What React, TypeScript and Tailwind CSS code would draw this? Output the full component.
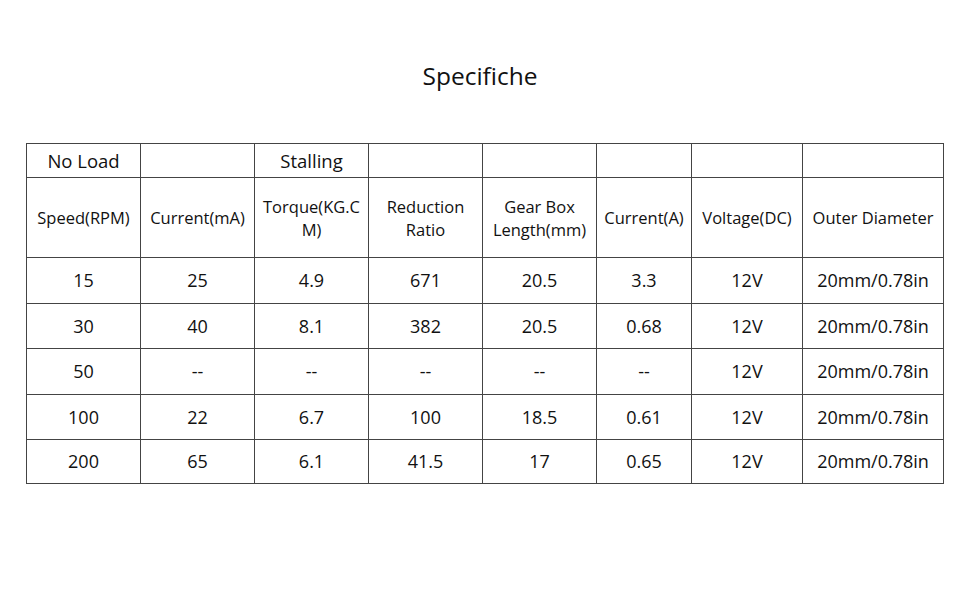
const headers = [
  "Speed(RPM)",
  "Current(mA)",
  "Torque(KG.C M)",
  "Reduction Ratio",
  "Gear Box Length(mm)",
  "Current(A)",
  "Voltage(DC)",
  "Outer Diameter",
];

const rows = [
  ["15", "25", "4.9", "671", "20.5", "3.3", "12V", "20mm/0.78in"],
  ["30", "40", "8.1", "382", "20.5", "0.68", "12V", "20mm/0.78in"],
  ["50", "--", "--", "--", "--", "--", "12V", "20mm/0.78in"],
  ["100", "22", "6.7", "100", "18.5", "0.61", "12V", "20mm/0.78in"],
  ["200", "65", "6.1", "41.5", "17", "0.65", "12V", "20mm/0.78in"],
];

const widths = ["w-[114px]", "w-[114px]", "w-[114px]", "w-[114px]", "w-[114px]", "w-[95px]", "w-[111px]", "w-[141px]"];
const rowHeights = ["h-[46px]", "h-[45px]", "h-[46px]", "h-[45px]", "h-[44px]"];

export default function App() {
  return (
    <div className="w-[970px] h-[600px] bg-white text-[#111] font-['Open_Sans',sans-serif]">
      <h1 className="pt-[58px] pr-[10px] text-center text-[24.5px] leading-[36px]">Specifiche</h1>
      <div className="pl-[26px] pt-[49px]">
        <table className="table-fixed border-collapse">
          <colgroup>
            {widths.map((w, i) => (
              <col key={i} className={w} />
            ))}
          </colgroup>
          <tbody>
            <tr className="h-[34px]">
              <td className="border border-[#444] text-center text-[18.5px]">No Load</td>
              <td className="border border-[#444]"></td>
              <td className="border border-[#444] text-center text-[18.5px]">Stalling</td>
              <td className="border border-[#444]"></td>
              <td className="border border-[#444]"></td>
              <td className="border border-[#444]"></td>
              <td className="border border-[#444]"></td>
              <td className="border border-[#444]"></td>
            </tr>
            <tr className="h-[80px]">
              {headers.map((h, i) => (
                <td key={i} className="border border-[#444] px-0 text-center text-[16.5px] leading-[23px] whitespace-nowrap">
                  {h === "Torque(KG.C M)" ? (
                    <>
                      Torque(KG.C
                      <br />
                      M)
                    </>
                  ) : h === "Reduction Ratio" ? (
                    <>
                      Reduction
                      <br />
                      Ratio
                    </>
                  ) : h === "Gear Box Length(mm)" ? (
                    <>
                      Gear Box
                      <br />
                      Length(mm)
                    </>
                  ) : (
                    h
                  )}
                </td>
              ))}
            </tr>
            {rows.map((r, ri) => (
              <tr key={ri} className={rowHeights[ri]}>
                {r.map((c, ci) => (
                  <td key={ci} className="border border-[#444] text-center text-[18px]">
                    {c}
                  </td>
                ))}
              </tr>
            ))}
          </tbody>
        </table>
      </div>
    </div>
  );
}
